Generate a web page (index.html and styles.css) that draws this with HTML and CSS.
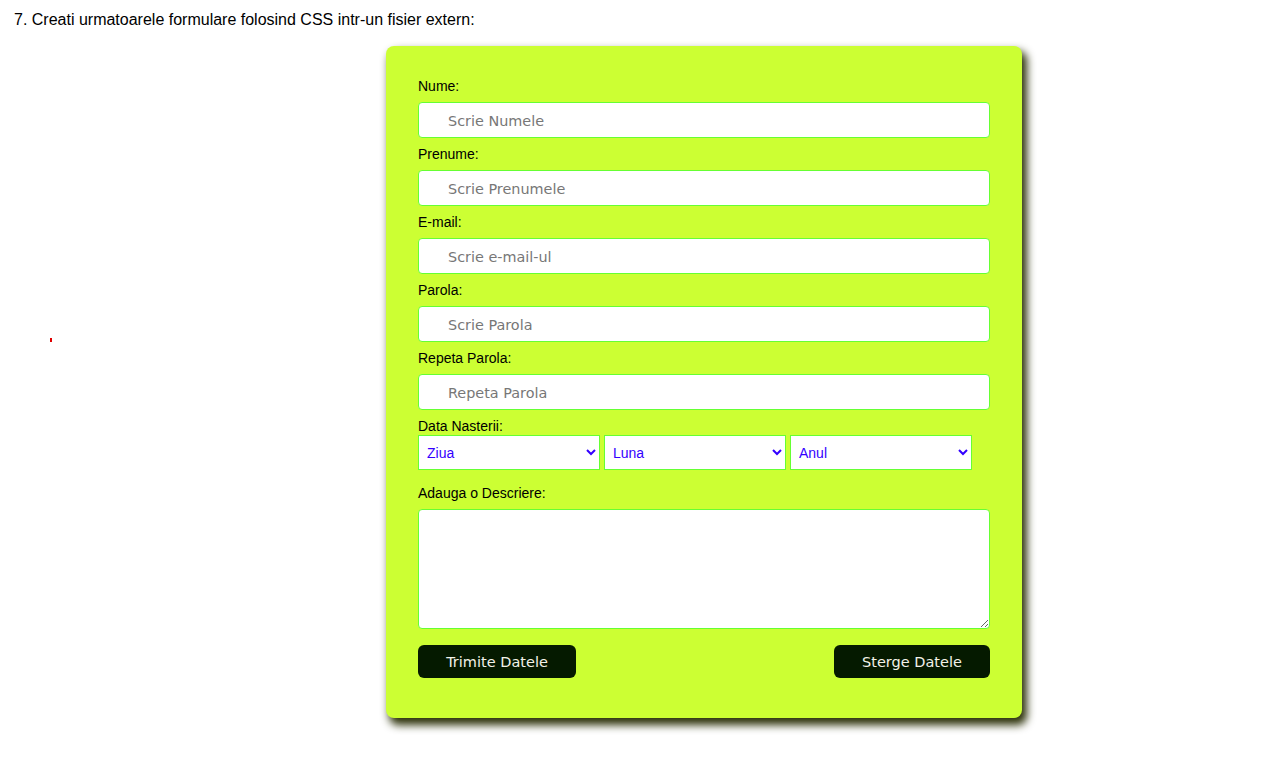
FILE: index.html
```html
<!DOCTYPE html>
<html lang="ro">
<head>
<meta charset="utf-8">
<title>Formular</title>
<link rel="stylesheet" href="styles.css">
</head>
<body>
<p class="task">7. Creati urmatoarele formulare folosind CSS intr-un fisier extern:</p>
<div class="stage">
  <span class="mark"></span>
  <form class="card">
    <label class="lbl">Nume:</label>
    <input class="field" type="text" placeholder="Scrie Numele">
    <label class="lbl">Prenume:</label>
    <input class="field" type="text" placeholder="Scrie Prenumele">
    <label class="lbl">E-mail:</label>
    <input class="field" type="email" placeholder="Scrie e-mail-ul">
    <label class="lbl">Parola:</label>
    <input class="field" type="password" placeholder="Scrie Parola">
    <label class="lbl">Repeta Parola:</label>
    <input class="field" type="password" placeholder="Repeta Parola">
    <label class="lbl lbl-tight">Data Nasterii:</label>
    <div class="dates">
      <select class="sel"><option>Ziua</option></select>
      <select class="sel"><option>Luna</option></select>
      <select class="sel"><option>Anul</option></select>
    </div>
    <label class="lbl lbl-desc">Adauga o Descriere:</label>
    <textarea class="desc"></textarea>
    <div class="actions">
      <button type="submit" class="btn btn-send">Trimite Datele</button>
      <button type="reset" class="btn btn-clear">Sterge Datele</button>
    </div>
  </form>
</div>
</body>
</html>
```

FILE: styles.css
```css
html, body {
  margin: 0;
  padding: 0;
  background: #ffffff;
}
body {
  font-family: "Liberation Sans", Arial, sans-serif;
  color: #000;
  min-height: 761px;
}
.task {
  margin: 0;
  padding: 11px 0 0 14px;
  font-size: 16px;
  line-height: 18px;
}
.stage {
  display: flex;
  align-items: flex-start;
  padding-top: 17px;
  padding-bottom: 30px;
}
.mark {
  display: block;
  width: 2px;
  height: 4px;
  background: #e00000;
  margin-left: 50px;
  margin-top: 292px;
}
.card {
  margin-left: 334px;
  width: 572px;
  padding: 32px 32px 40px 32px;
  background: #ccff33;
  border-radius: 8px;
  box-shadow: 4px 6px 9px 1px rgb(45, 50, 10);
  display: flex;
  flex-direction: column;
}
.lbl {
  display: block;
  font-size: 14px;
  line-height: 16px;
  margin-bottom: 8px;
}
.lbl-tight {
  margin-bottom: 1px;
}
.lbl-desc {
  margin-top: 15px;
}
.field {
  box-sizing: border-box;
  width: 572px;
  height: 36px;
  border: 1px solid #66ff33;
  border-radius: 4px;
  padding: 1px 0 0 29px;
  margin: 0 0 8px 0;
  font-family: "DejaVu Sans", Verdana, sans-serif;
  font-size: 14.4px;
  background: #fff;
  outline: none;
}
.field::placeholder {
  color: #777;
}
.dates {
  display: flex;
  gap: 4px;
}
.sel {
  box-sizing: border-box;
  width: 182px;
  height: 35px;
  border: 1px solid #66ff33;
  border-radius: 0;
  background: #fff;
  color: #3300ff;
  font-family: "Liberation Sans", Arial, sans-serif;
  font-size: 14px;
  padding: 0 4px;
}
.desc {
  box-sizing: border-box;
  width: 572px;
  height: 120px;
  border: 1px solid #66ff33;
  border-radius: 4px;
  margin: 0;
  background: #fff;
  resize: both;
}
.actions {
  display: flex;
  justify-content: space-between;
  margin-top: 16px;
}
.btn {
  height: 33px;
  border: none;
  border-radius: 6px;
  background: #051a00;
  color: #f2f2e8;
  font-family: "DejaVu Sans", Verdana, sans-serif;
  font-size: 14.5px;
  padding: 0;
}
.btn-send {
  width: 158px;
}
.btn-clear {
  width: 156px;
}
```
